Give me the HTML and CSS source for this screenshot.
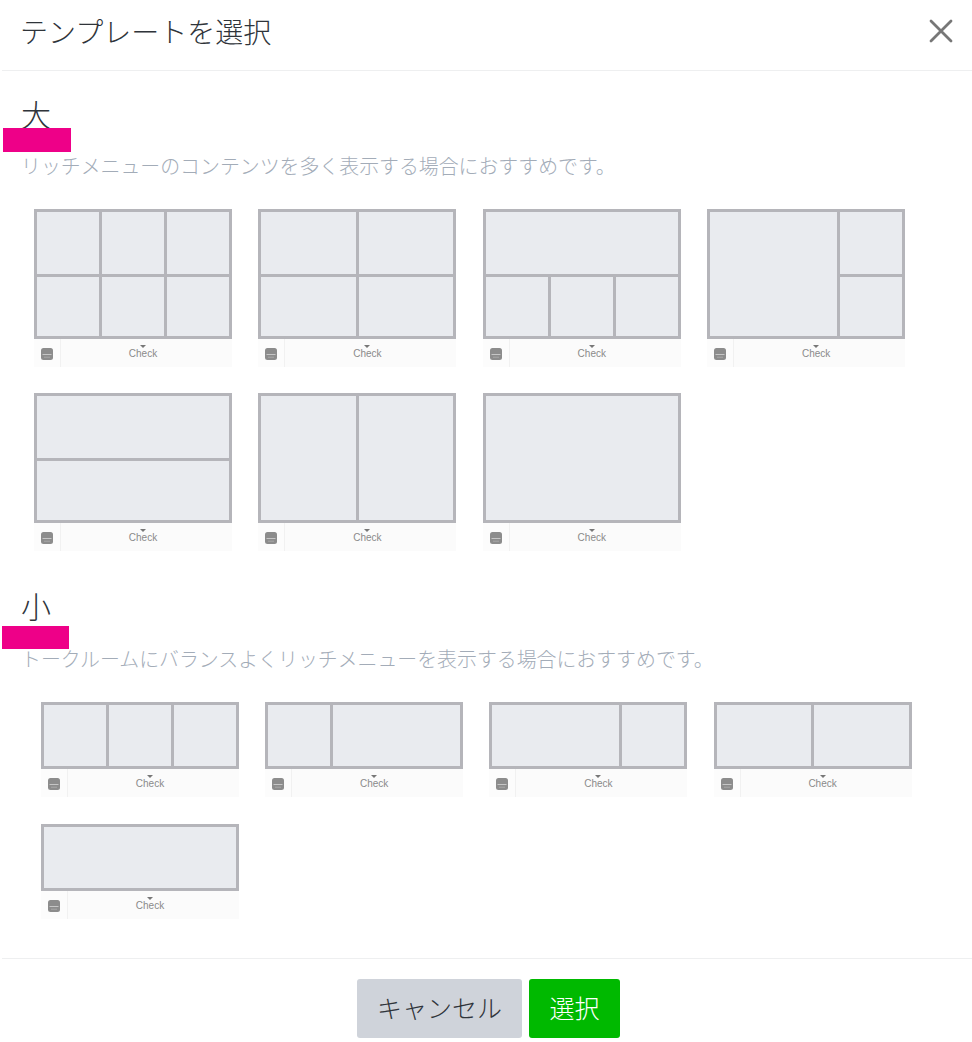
FILE: index.html
```html
<!DOCTYPE html>
<html lang="ja">
<head>
    <meta charset="UTF-8">
    <title>テンプレートを選択</title>
    <link rel="stylesheet" href="styles.css">
</head>
<body>
    <svg width="0" height="0" class="defs">
        <symbol id="menuIcon" viewBox="0 0 12 12">
            <rect width="12" height="12" rx="2.5" fill="#8c8c8c"/>
            <path d="M1.5 6.5h9" stroke="#c6c6c6" stroke-width="1"/>
            <path d="M3 9.2h6" stroke="#a8a8a8" stroke-width="1"/>
        </symbol>
    </svg>

    <div class="modal">
        <div class="modal-header">
            <h1>テンプレートを選択</h1>
            <svg class="close" width="24" height="24" viewBox="0 0 24 24">
                <path d="M2 2l20 20M22 2L2 22" stroke="#777" stroke-width="2.8" stroke-linecap="round"/>
            </svg>
        </div>

        <div class="modal-body">
            <!-- Large templates -->
            <section class="group group-large">
                <h2>大</h2>
                <div class="mark"></div>
                <p>リッチメニューのコンテンツを多く表示する場合におすすめです。</p>
                <div class="templates">
                    <div class="template">
                        <div class="cells large">
                            <i class="s2"></i><i class="s2"></i><i class="s2"></i><i class="s2"></i><i class="s2"></i><i class="s2"></i>
                        </div>
                        <div class="bar"><span class="bar-icon"><svg width="12" height="12"><use href="#menuIcon"/></svg></span><span class="bar-label">Check</span></div>
                    </div>
                    <div class="template">
                        <div class="cells large">
                            <i class="s3"></i><i class="s3"></i><i class="s3"></i><i class="s3"></i>
                        </div>
                        <div class="bar"><span class="bar-icon"><svg width="12" height="12"><use href="#menuIcon"/></svg></span><span class="bar-label">Check</span></div>
                    </div>
                    <div class="template">
                        <div class="cells large">
                            <i class="s6"></i><i class="s2"></i><i class="s2"></i><i class="s2"></i>
                        </div>
                        <div class="bar"><span class="bar-icon"><svg width="12" height="12"><use href="#menuIcon"/></svg></span><span class="bar-label">Check</span></div>
                    </div>
                    <div class="template">
                        <div class="cells large">
                            <i class="s4 tall"></i><i class="s2"></i><i class="s2"></i>
                        </div>
                        <div class="bar"><span class="bar-icon"><svg width="12" height="12"><use href="#menuIcon"/></svg></span><span class="bar-label">Check</span></div>
                    </div>
                    <div class="template">
                        <div class="cells large">
                            <i class="s6"></i><i class="s6"></i>
                        </div>
                        <div class="bar"><span class="bar-icon"><svg width="12" height="12"><use href="#menuIcon"/></svg></span><span class="bar-label">Check</span></div>
                    </div>
                    <div class="template">
                        <div class="cells large">
                            <i class="s3 tall"></i><i class="s3 tall"></i>
                        </div>
                        <div class="bar"><span class="bar-icon"><svg width="12" height="12"><use href="#menuIcon"/></svg></span><span class="bar-label">Check</span></div>
                    </div>
                    <div class="template">
                        <div class="cells large">
                            <i class="s6 tall"></i>
                        </div>
                        <div class="bar"><span class="bar-icon"><svg width="12" height="12"><use href="#menuIcon"/></svg></span><span class="bar-label">Check</span></div>
                    </div>
                </div>
            </section>

            <!-- Small templates -->
            <section class="group group-small">
                <h2>小</h2>
                <div class="mark"></div>
                <p>トークルームにバランスよくリッチメニューを表示する場合におすすめです。</p>
                <div class="templates">
                    <div class="template">
                        <div class="cells small">
                            <i class="s2"></i><i class="s2"></i><i class="s2"></i>
                        </div>
                        <div class="bar"><span class="bar-icon"><svg width="12" height="12"><use href="#menuIcon"/></svg></span><span class="bar-label">Check</span></div>
                    </div>
                    <div class="template">
                        <div class="cells small">
                            <i class="s2"></i><i class="s4"></i>
                        </div>
                        <div class="bar"><span class="bar-icon"><svg width="12" height="12"><use href="#menuIcon"/></svg></span><span class="bar-label">Check</span></div>
                    </div>
                    <div class="template">
                        <div class="cells small">
                            <i class="s4"></i><i class="s2"></i>
                        </div>
                        <div class="bar"><span class="bar-icon"><svg width="12" height="12"><use href="#menuIcon"/></svg></span><span class="bar-label">Check</span></div>
                    </div>
                    <div class="template">
                        <div class="cells small">
                            <i class="s3"></i><i class="s3"></i>
                        </div>
                        <div class="bar"><span class="bar-icon"><svg width="12" height="12"><use href="#menuIcon"/></svg></span><span class="bar-label">Check</span></div>
                    </div>
                    <div class="template">
                        <div class="cells small">
                            <i class="s6"></i>
                        </div>
                        <div class="bar"><span class="bar-icon"><svg width="12" height="12"><use href="#menuIcon"/></svg></span><span class="bar-label">Check</span></div>
                    </div>
                </div>
            </section>
        </div>

        <div class="modal-footer">
            <button class="btn-cancel">キャンセル</button>
            <button class="btn-select">選択</button>
        </div>
    </div>
</body>
</html>
```

FILE: styles.css
```css
* {
    margin: 0;
    padding: 0;
    box-sizing: border-box;
    font-family: "Noto Sans CJK JP", "Noto Sans", sans-serif;
}

body {
    background: white;
    overflow: hidden;
}

.defs {
    position: absolute;
}

.modal {
    width: 972px;
    height: 1042px;
    display: flex;
    flex-direction: column;
}

.modal-header {
    height: 71px;
    margin-left: 2px;
    padding: 0 19px 8px 18px;
    border-bottom: 1px solid #eeeff0;
    display: flex;
    align-items: center;
    justify-content: space-between;
}

.modal-header h1 {
    font-size: 28px;
    font-weight: 300;
    color: #2f343a;
}

.modal-body {
    height: 887px;
    padding: 0 0 0 21px;
}

.group {
    position: relative;
}

.group h2 {
    font-size: 30px;
    font-weight: 300;
    line-height: 40px;
    color: #2f343a;
}

.group p {
    font-size: 19.9px;
    font-weight: 300;
    line-height: 28px;
    color: #a3acb8;
}

.mark {
    position: absolute;
    background: #ee0088;
}

.group-large {
    padding-top: 22px;
}

.group-large h2 {
    margin-bottom: 19px;
}

.group-large .mark {
    left: -18px;
    top: 57px;
    width: 68px;
    height: 24px;
}

.group-large .templates {
    margin: 29px 0 0 13px;
    column-gap: 26.4px;
    row-gap: 26px;
}

.group-small {
    padding-top: 34px;
}

.group-small h2 {
    margin-bottom: 20px;
}

.group-small .mark {
    left: -19px;
    top: 75px;
    width: 67px;
    height: 23px;
}

.group-small .templates {
    margin: 29px 0 0 20px;
    column-gap: 26.2px;
    row-gap: 27px;
}

.templates {
    display: grid;
    grid-template-columns: repeat(4, 198px);
}

.template {
    width: 198px;
}

.cells {
    display: grid;
    grid-template-columns: repeat(6, 1fr);
    gap: 3px;
    padding: 3px;
    background: #b5b5ba;
}

.cells.large {
    height: 130px;
    grid-template-rows: 62px 1fr;
}

.cells.small {
    height: 67px;
    grid-template-rows: 1fr;
}

.cells i {
    display: block;
    background: #e9ebef;
}

.s2 { grid-column: span 2; }
.s3 { grid-column: span 3; }
.s4 { grid-column: span 4; }
.s6 { grid-column: span 6; }
.tall { grid-row: span 2; }

.bar {
    height: 28px;
    background: #fbfbfb;
    display: flex;
}

.bar-icon {
    width: 27px;
    padding-top: 2px;
    display: flex;
    align-items: center;
    justify-content: center;
    border-right: 1px solid #f1f1f1;
    background: #fcfcfc;
}

.bar-icon svg {
    filter: blur(0.4px);
}

.bar-label {
    position: relative;
    flex: 1;
    padding: 1px 7px 0 0;
    text-align: center;
    font-family: "Liberation Sans", sans-serif;
    font-size: 10px;
    line-height: 28px;
    color: #8a8a8a;
}

.bar-label::before {
    content: "";
    position: absolute;
    left: 79px;
    top: 6px;
    border: 3px solid transparent;
    border-bottom: 0;
    border-top-color: #777;
}

.modal-footer {
    margin-left: 2px;
    flex: 1;
    border-top: 1px solid #eeeff0;
    padding: 20px 350px 0 355px;
    display: flex;
    gap: 7px;
    align-items: flex-start;
}

button {
    height: 59px;
    padding-bottom: 3px;
    border: none;
    border-radius: 3px;
    font-size: 25px;
    font-weight: 300;
}

.btn-cancel {
    width: 165px;
    background: #cfd3da;
    color: #2f343a;
}

.btn-select {
    width: 91px;
    background: #00b900;
    color: white;
}
```
